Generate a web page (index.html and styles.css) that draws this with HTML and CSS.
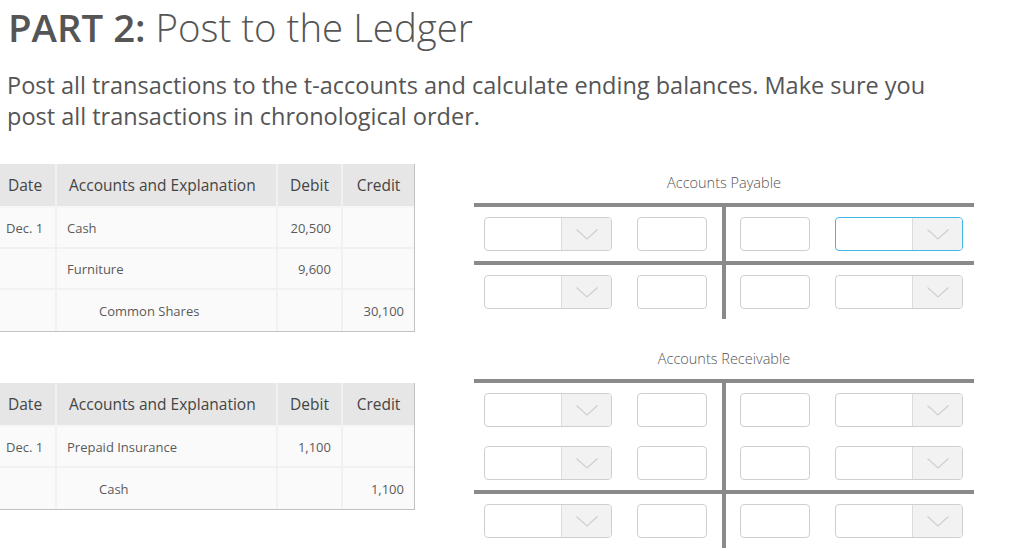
FILE: index.html
```html
<!DOCTYPE html>
<html lang="en">
<head>
<meta charset="utf-8">
<title>PART 2: Post to the Ledger</title>
<link rel="stylesheet" href="styles.css">
</head>
<body>
<header class="page-head">
  <h1 class="title"><strong>PART 2:</strong> Post to the Ledger</h1>
  <p class="intro">Post all transactions to the t-accounts and calculate ending balances. Make sure you post all transactions in chronological order.</p>
</header>
<main class="workspace">
  <section class="journal">
    <table class="jtable">
      <colgroup><col class="c-date"><col class="c-acct"><col class="c-debit"><col class="c-credit"></colgroup>
      <thead>
        <tr class="head"><th class="th-date">Date</th><th class="th-acct">Accounts and Explanation</th><th>Debit</th><th>Credit</th></tr>
      </thead>
      <tbody>
        <tr><td class="td-date">Dec. 1</td><td class="td-acct">Cash</td><td class="td-num">20,500</td><td class="td-num"></td></tr>
        <tr><td class="td-date"></td><td class="td-acct">Furniture</td><td class="td-num">9,600</td><td class="td-num"></td></tr>
        <tr class="last"><td class="td-date"></td><td class="td-acct indent">Common Shares</td><td class="td-num"></td><td class="td-num">30,100</td></tr>
      </tbody>
    </table>
    <table class="jtable second">
      <colgroup><col class="c-date"><col class="c-acct"><col class="c-debit"><col class="c-credit"></colgroup>
      <thead>
        <tr class="head"><th class="th-date">Date</th><th class="th-acct">Accounts and Explanation</th><th>Debit</th><th>Credit</th></tr>
      </thead>
      <tbody>
        <tr><td class="td-date">Dec. 1</td><td class="td-acct">Prepaid Insurance</td><td class="td-num">1,100</td><td class="td-num"></td></tr>
        <tr class="last"><td class="td-date"></td><td class="td-acct indent">Cash</td><td class="td-num"></td><td class="td-num">1,100</td></tr>
      </tbody>
    </table>
  </section>

  <section class="ledger">
    <div class="taccount">
      <div class="ta-title">Accounts Payable</div>
      <div class="ta-rule"></div>
      <div class="ta-section">
        <div class="ta-side left">
          <div class="ta-row"><div class="select"><span class="caret"><svg width="22" height="11" viewBox="0 0 22 11"><polyline points="0.5,0.5 11,10 21.5,0.5"/></svg></span></div><div class="field"></div></div>
        </div>
        <div class="ta-bar"></div>
        <div class="ta-side right">
          <div class="ta-row"><div class="field"></div><div class="select focused"><span class="caret"><svg width="22" height="11" viewBox="0 0 22 11"><polyline points="0.5,0.5 11,10 21.5,0.5"/></svg></span></div></div>
        </div>
      </div>
      <div class="ta-rule"></div>
      <div class="ta-section">
        <div class="ta-side left">
          <div class="ta-row"><div class="select"><span class="caret"><svg width="22" height="11" viewBox="0 0 22 11"><polyline points="0.5,0.5 11,10 21.5,0.5"/></svg></span></div><div class="field"></div></div>
        </div>
        <div class="ta-bar"></div>
        <div class="ta-side right">
          <div class="ta-row"><div class="field"></div><div class="select"><span class="caret"><svg width="22" height="11" viewBox="0 0 22 11"><polyline points="0.5,0.5 11,10 21.5,0.5"/></svg></span></div></div>
        </div>
      </div>
    </div>

    <div class="taccount second">
      <div class="ta-title">Accounts Receivable</div>
      <div class="ta-rule"></div>
      <div class="ta-section">
        <div class="ta-side left">
          <div class="ta-row"><div class="select"><span class="caret"><svg width="22" height="11" viewBox="0 0 22 11"><polyline points="0.5,0.5 11,10 21.5,0.5"/></svg></span></div><div class="field"></div></div>
          <div class="ta-row"><div class="select"><span class="caret"><svg width="22" height="11" viewBox="0 0 22 11"><polyline points="0.5,0.5 11,10 21.5,0.5"/></svg></span></div><div class="field"></div></div>
        </div>
        <div class="ta-bar"></div>
        <div class="ta-side right">
          <div class="ta-row"><div class="field"></div><div class="select"><span class="caret"><svg width="22" height="11" viewBox="0 0 22 11"><polyline points="0.5,0.5 11,10 21.5,0.5"/></svg></span></div></div>
          <div class="ta-row"><div class="field"></div><div class="select"><span class="caret"><svg width="22" height="11" viewBox="0 0 22 11"><polyline points="0.5,0.5 11,10 21.5,0.5"/></svg></span></div></div>
        </div>
      </div>
      <div class="ta-rule"></div>
      <div class="ta-section">
        <div class="ta-side left">
          <div class="ta-row"><div class="select"><span class="caret"><svg width="22" height="11" viewBox="0 0 22 11"><polyline points="0.5,0.5 11,10 21.5,0.5"/></svg></span></div><div class="field"></div></div>
        </div>
        <div class="ta-bar"></div>
        <div class="ta-side right">
          <div class="ta-row"><div class="field"></div><div class="select"><span class="caret"><svg width="22" height="11" viewBox="0 0 22 11"><polyline points="0.5,0.5 11,10 21.5,0.5"/></svg></span></div></div>
        </div>
      </div>
    </div>
  </section>
</main>
</body>
</html>
```

FILE: styles.css
```css
html, body {
  margin: 0;
  padding: 0;
  background: #fff;
}
body {
  font-family: "Open Sans", "Liberation Sans", Arial, sans-serif;
  color: #555;
  overflow: hidden;
}

/* Heading */
.title {
  margin: 0;
  padding-left: 8px;
  font-size: 38.4px;
  line-height: 54px;
  font-weight: 300;
  color: #555;
}
.title strong {
  font-weight: 600;
}
.intro {
  margin: 16px 0 0 7px;
  max-width: 950px;
  font-size: 23.5px;
  line-height: 31px;
  color: #555;
}

/* Layout */
.workspace {
  display: flex;
  align-items: flex-start;
  margin-top: 32px;
}
.journal {
  width: 415px;
  flex: none;
}
.ledger {
  width: 500px;
  margin-left: 59px;
  padding-top: 9px;
  flex: none;
}

/* Journal tables */
.jtable {
  width: 415px;
  table-layout: fixed;
  border-collapse: separate;
  border-spacing: 0;
  background: #fafafa;
  border-right: 1px solid #c2c2c2;
  border-bottom: 1px solid #c2c2c2;
}
.jtable.second {
  margin-top: 51px;
}
.c-date { width: 57px; }
.c-acct { width: 221px; }
.c-debit { width: 65px; }
.c-credit { width: 71px; }

.jtable th,
.jtable td {
  padding: 0;
  border-right: 2px solid #f1f1f1;
  border-bottom: 2px solid #f1f1f1;
  vertical-align: middle;
}
.jtable th:last-child,
.jtable td:last-child {
  border-right: none;
}
.jtable tr.last td {
  border-bottom: none;
}
.jtable thead tr {
  height: 44px;
}
.jtable tbody tr {
  height: 41px;
}
.jtable th {
  background: #e6e6e6;
  font-size: 15.5px;
  font-weight: 500;
  color: #444;
  text-align: center;
  border-bottom-color: #f6f6f6;
}
.jtable th.th-date {
  text-align: left;
  padding-left: 8px;
}
.jtable th.th-acct {
  text-align: left;
  padding-left: 12px;
}
.jtable td {
  font-size: 13px;
  font-weight: 400;
  color: #5a5a5a;
}
.td-date {
  padding-left: 6px !important;
}
.td-acct {
  padding-left: 10px !important;
}
.td-acct.indent {
  padding-left: 42px !important;
}
.td-num {
  text-align: right;
  padding-right: 10px !important;
}

/* T-accounts */
.taccount.second {
  margin-top: 30px;
}
.ta-title {
  text-align: center;
  font-size: 14.5px;
  line-height: 20px;
  font-weight: 300;
  color: #555;
  margin-bottom: 10px;
}
.ta-rule {
  height: 4px;
  background: #8a8a8a;
}
.ta-section {
  display: grid;
  grid-template-columns: 1fr 4px 1fr;
}
.ta-bar {
  background: #8a8a8a;
}
.ta-side {
  display: flex;
  flex-direction: column;
  gap: 19px;
  padding-top: 10px;
  padding-bottom: 10px;
}
.ta-side.left {
  padding-left: 10px;
  padding-right: 15px;
}
.ta-side.right {
  padding-left: 14px;
  padding-right: 11px;
}
.ta-row {
  display: flex;
  justify-content: space-between;
  align-items: center;
}
.select {
  box-sizing: border-box;
  width: 128px;
  height: 34px;
  border: 1px solid #cfcfcf;
  border-radius: 4px;
  background: #fff;
  display: flex;
  overflow: hidden;
}
.select.focused {
  border: 1.5px solid #45b5e3;
}
.caret {
  margin-left: auto;
  width: 49px;
  background: #f2f2f2;
  border-left: 1px solid #dcdcdc;
  display: flex;
  align-items: center;
  justify-content: center;
}
.caret svg polyline {
  fill: none;
  stroke: #cfcfcf;
  stroke-width: 1.2;
}
.field {
  box-sizing: border-box;
  width: 70px;
  height: 34px;
  border: 1px solid #cfcfcf;
  border-radius: 4px;
  background: #fff;
}
```
